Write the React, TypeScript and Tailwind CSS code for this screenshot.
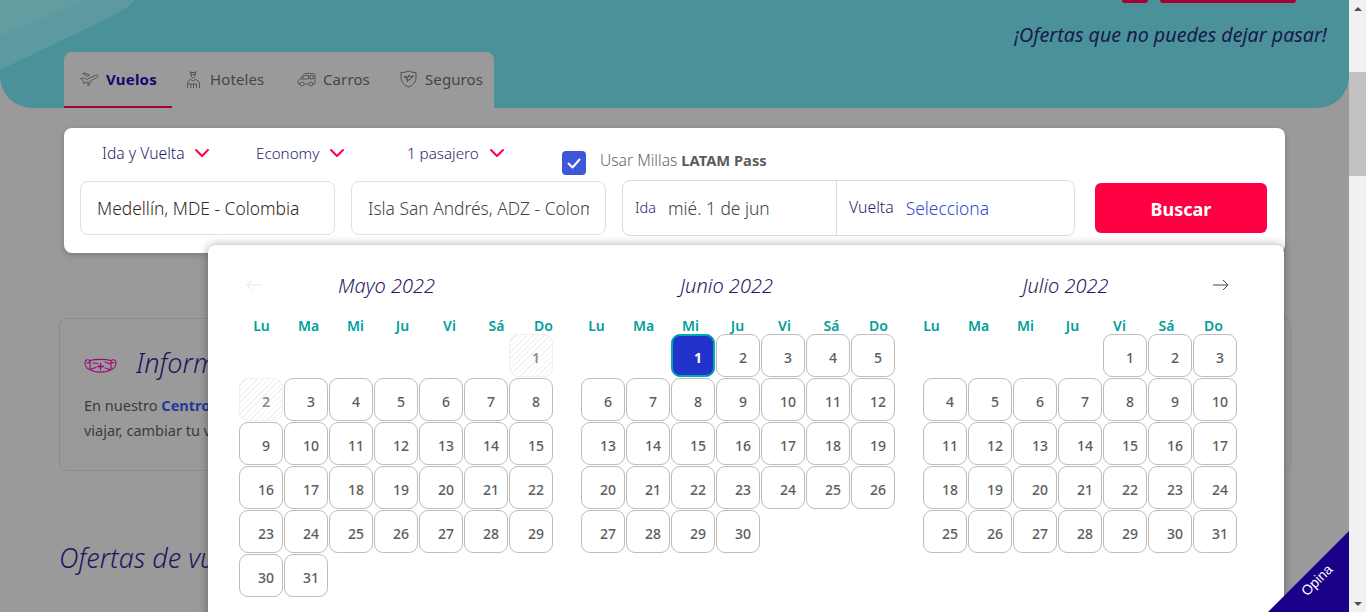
import React from "react";

type Cell = number | null;
const range = (a: number, b: number) => Array.from({ length: b - a + 1 }, (_, i) => a + i);
const blanks = (n: number): Cell[] => Array.from({ length: n }, () => null);
const DAYS = ["Lu", "Ma", "Mi", "Ju", "Vi", "Sá", "Do"];

const months = [
  { title: "Mayo 2022", titleCls: "pr-[20px]", weekCls: "-ml-[1px]", cells: [...blanks(6), ...range(1, 31)], disabled: [1, 2], selected: 0 },
  { title: "Junio 2022", titleCls: "pr-[24px]", weekCls: "-ml-[8px]", cells: [...blanks(2), ...range(1, 30)], disabled: [], selected: 1 },
  { title: "Julio 2022", titleCls: "pr-[30px]", weekCls: "-ml-[15px]", cells: [...blanks(4), ...range(1, 31)], disabled: [], selected: 0 },
];

function Chevron() {
  return (
    <svg width="16" height="10" viewBox="0 0 16 10" fill="none" className="shrink-0">
      <path d="M2 2l6 6 6-6" stroke="#ff0043" strokeWidth="2" strokeLinecap="round" strokeLinejoin="round" />
    </svg>
  );
}

function PlaneIcon() {
  return (
    <svg width="19" height="16" viewBox="0 0 19 16" fill="none" stroke="#454545" strokeWidth="0.8" strokeLinejoin="round" strokeLinecap="round">
      <path d="M1 7.500l2.500-.8 3 1.700 8-3.600c1.300-.6 3-.8 3.500-.2.400.7-.3 1.500-1.500 2.200L11 9.500l-1.600 4.500-1.600.7.600-4-3 1.300-1.200.6-1-.5.800-1.400L1 7.500z" />
      <path d="M3 2.700l1.300-.8 5.200 2.200-2 1.200L3 2.700z" />
    </svg>
  );
}
function BellhopIcon() {
  return (
    <svg width="13" height="19" viewBox="0 0 13 19" fill="none" stroke="#454545" strokeWidth="0.8" strokeLinejoin="round">
      <path d="M3.500 1v3.500h5V1M3.500 2.500h5M4 4.500c0 2 1 3.500 2 3.500s2-1.500 2-3.500" />
      <path d="M.5 18v-4.500C.5 12 1.500 10 4 9.500l2 1.500 2-1.500c2.500.5 4.500 2 4.500 4V18" />
      <path d="M.5 14h9v4M3.800 14v4M6.500 14v4" />
    </svg>
  );
}
function CarIcon() {
  return (
    <svg width="19" height="15" viewBox="0 0 19 15" fill="none" stroke="#454545" strokeWidth="0.8" strokeLinejoin="round">
      <path d="M3 12H1.500L1 9.500c0-1 1-2 2-2.200L6.500 2.500C7 2 7.500 1.500 8.500 1.500H16c1 0 2 .7 2 2V11c0 .7-.4 1-1 1h-1M7.500 12H12" />
      <path d="M4.500 7l3-3.500h4V7zM13 3.500h3.200V7H13z" />
      <circle cx="5.200" cy="12" r="2" />
      <circle cx="13.800" cy="12" r="2" />
    </svg>
  );
}
function ShieldIcon() {
  return (
    <svg width="17" height="18" viewBox="0 0 17 18" fill="none" stroke="#454545" strokeWidth="0.9" strokeLinejoin="round">
      <path d="M8.500 1C6 2.200 3.500 2.500 1 2.500v5C1 12 4.500 15.500 8.500 17c4-1.500 7.500-5 7.500-9.500v-5c-2.500 0-5-.3-7.500-1.500z" />
      <path d="M4 6.500l3 .8-1 1.700 2 .5-1 2 3-2.500 3.500-3-3 .9L9.200 5 8 7.500 4 6.500z" strokeWidth="1" />
    </svg>
  );
}
function MaskIcon() {
  return (
    <svg width="33" height="16" viewBox="0 0 33 16" fill="none" stroke="#9c0a74" strokeWidth="1.100" strokeLinejoin="round" strokeLinecap="round" className="mt-[5px]">
      <path d="M6 2.500C11 1 22 1 27 2.500v9c-5 3.500-16 3.500-21 0v-9z" />
      <path d="M6 2.500C3 1 1 2 1 5c0 3 2 6 5 6.500M27 2.500c3-1.500 5-.5 5 2.500 0 3-2 6-5 6.500" />
      <path d="M3 5c1-.5 2-.5 3-.3M30 5c-1-.5-2-.5-3-.3M9 5l5 .5M21 4l5 2M7 11l5-1.500M21 10l5 1.500" />
      <path d="M16.500 5.500v6M13.500 8.500h6" strokeWidth="1.300" />
    </svg>
  );
}

function Tab({ icon, label, active, cls, iconCls }: { icon: React.ReactNode; label: string; active?: boolean; cls: string; iconCls: string }) {
  return (
    <div className={`flex h-[56px] items-center border-b-2 ${cls} ${active ? "border-[#a70034]" : "border-transparent"}`}>
      <span className={`flex shrink-0 items-center ${iconCls}`}>{icon}</span>
      <span className={active ? "text-[15px] font-bold tracking-[0.2px] text-[#15086e]" : "text-[15px] tracking-[0.1px] text-[#454545]"}>{label}</span>
    </div>
  );
}

function Day({ n, disabled, selected }: { n: Cell; disabled: boolean; selected: boolean }) {
  if (n === null) return <div className="h-[43px] w-[44px]" />;
  const base = "flex h-[43px] w-[44px] items-end justify-center rounded-[9px] border pb-[9px] pl-[10px] text-[14px] leading-[18px]";
  if (selected) return <div className={`${base} border-[#00a9b5] bg-[#2233cc] font-bold text-white shadow-[inset_0_0_0_1px_#00a9b5]`}>{n}</div>;
  if (disabled)
    return (
      <div className={`${base} border-[#f0f0f0] bg-[repeating-linear-gradient(135deg,#f1f1f1_0,#f1f1f1_1px,#ffffff_1px,#ffffff_4px)] font-semibold text-[#8a8a8a]`}>
        {n}
      </div>
    );
  return <div className={`${base} border-[#bdbdbd] bg-white font-medium text-[#5c5c5c]`}>{n}</div>;
}

function Month({ m }: { m: (typeof months)[number] }) {
  return (
    <div className="w-[315px] shrink-0">
      <div className={`h-[24px] text-center text-[20px] font-light italic leading-[24px] text-[#251a66] ${m.titleCls}`}>{m.title}</div>
      <div className={`mt-[20px] grid w-[329px] grid-cols-7 text-center text-[14px] font-semibold leading-[16px] text-[#00a099] ${m.weekCls}`}>
        {DAYS.map((d) => (
          <div key={d}>{d}</div>
        ))}
      </div>
      <div className="grid grid-cols-[repeat(7,44px)] gap-x-[1px] gap-y-[1px]">
        {m.cells.map((n, i) => (
          <Day key={i} n={n} disabled={n !== null && m.disabled.includes(n)} selected={n === m.selected} />
        ))}
      </div>
    </div>
  );
}

export default function App() {
  return (
    <div className="flex h-[612px] w-[1366px] overflow-hidden font-['Noto_Sans','Open_Sans',sans-serif]">
      <main className="relative h-[612px] w-[1349px] shrink-0 overflow-hidden bg-[#9a9a9a]">
        {/* Header band */}
        <header className="relative flex h-[108px] justify-between overflow-hidden rounded-b-[32px] bg-[#4a9199]">
          <svg width="150" height="80" viewBox="0 0 150 80" className="absolute left-0 top-0" fill="none">
            <path d="M0 70L100 22C116 14 128 8 135 0H0z" fill="#5c9a9f" />
            <path d="M0 36L85 0H0z" fill="#619da1" />
          </svg>
          <div className="relative ml-[64px] mt-[52px] flex h-[56px] w-[430px] rounded-t-[8px] bg-[#9a9a9a]">
            <Tab cls="w-[108px] pl-[16px]" iconCls="w-[26px]" icon={<PlaneIcon />} label="Vuelos" active />
            <Tab cls="ml-[14px] w-[111px] pl-[1px]" iconCls="w-[23px]" icon={<BellhopIcon />} label="Hoteles" />
            <Tab cls="w-[103px]" iconCls="w-[26px]" icon={<CarIcon />} label="Carros" />
            <Tab cls="w-[94px]" iconCls="w-[25px]" icon={<ShieldIcon />} label="Seguros" />
          </div>
          <div className="relative flex flex-col items-end pr-[22px]">
            <div className="mr-[31px] flex gap-[12px]">
              <div className="h-[3px] w-[26px] rounded-b-[3px] bg-[#a70034]" />
              <div className="h-[3px] w-[136px] rounded-b-[3px] bg-[#a70034]" />
            </div>
            <p className="mt-[18px] text-[19.7px] italic leading-[27px] text-[#1a1a4c]">¡Ofertas que no puedes dejar pasar!</p>
          </div>
        </header>

        {/* Search card */}
        <section className="ml-[64px] mt-[20px] h-[125px] w-[1221px] rounded-[8px] bg-white px-[16px] pt-[16px] shadow-[0_2px_6px_rgba(0,0,0,0.2)]">
          <div className="flex h-[36px] items-start">
            <div className="ml-[22px] flex w-[154px] items-center gap-[9px] text-[15.7px] font-light leading-[18px] text-[#2a1f6e]">
              Ida y Vuelta <Chevron />
            </div>
            <div className="flex w-[151px] items-center gap-[10px] text-[15.2px] font-light leading-[18px] text-[#2a1f6e]">
              Economy <Chevron />
            </div>
            <div className="flex w-[155px] items-center gap-[10px] text-[15.2px] font-light leading-[18px] text-[#2a1f6e]">
              1 pasajero <Chevron />
            </div>
            <div className="mt-[7px] flex items-center">
              <span className="flex h-[24px] w-[24px] items-center justify-center rounded-[4px] bg-[#3d57d8]">
                <svg width="14" height="11" viewBox="0 0 14 11" fill="none">
                  <path d="M1.500 5.500l4 4 7-8" stroke="#fff" strokeWidth="2" strokeLinecap="round" strokeLinejoin="round" />
                </svg>
              </span>
              <span className="ml-[14px] mt-[-4px] text-[15.6px] font-light text-[#666666]">
                Usar Millas <b className="text-[14.7px] font-bold text-[#5c5c5c]">LATAM Pass</b>
              </span>
            </div>
          </div>
          <div className="flex items-center">
            <div className="flex h-[54px] w-[255px] items-center rounded-[8px] border border-[#e0e0e0] pl-[16px] text-[17.4px] font-light text-[#33271f]">
              Medellín, MDE - Colombia
            </div>
            <div className="ml-[16px] flex h-[54px] w-[255px] items-center overflow-hidden rounded-[8px] border border-[#e0e0e0] pl-[16px] pr-[16px] text-[17.4px] font-light text-[#444444]">
              <span className="overflow-hidden whitespace-nowrap">Isla San Andrés, ADZ - Colombia</span>
            </div>
            <div className="ml-[16px] flex h-[56px] w-[453px] rounded-[8px] border border-[#dcdcdc]">
              <div className="flex w-[214px] items-center border-r border-[#dcdcdc] pl-[12px]">
                <span className="text-[14.5px] font-light text-[#2a1f6e]">Ida</span>
                <span className="ml-[12px] text-[17.4px] font-light text-[#444444]">mié. 1 de jun</span>
              </div>
              <div className="flex items-center pl-[12px]">
                <span className="text-[15.8px] font-light text-[#2a1f6e]">Vuelta</span>
                <span className="ml-[12px] text-[17.4px] font-light text-[#2f4ad6]">Selecciona</span>
              </div>
            </div>
            <button className="ml-[20px] h-[50px] w-[172px] rounded-[6px] bg-[#ff0043] pt-[3px] text-[18px] font-bold text-white">Buscar</button>
          </div>
        </section>

        {/* Info box */}
        <section className="ml-[59px] mt-[65px] h-[153px] w-[1232px] rounded-[8px] border border-[#8c8c8c] pl-[24px] pt-[24px]">
          <div className="flex h-[40px] items-center gap-[19px]">
            <MaskIcon />
            <h2 className="text-[27px] font-light italic text-[#1c1660]">Información</h2>
          </div>
          <p className="mt-[10px] text-[14.5px] leading-[25px] text-[#3a3a3a]">
            En nuestro <b className="font-bold text-[#26369a]">Centro</b>
            <br />
            viajar, cambiar tu v
          </p>
        </section>

        {/* Offers */}
        <h2 className="ml-[59px] mt-[68px] w-[152px] overflow-hidden whitespace-nowrap text-[27px] font-light italic leading-[38px] text-[#1c1660]">Ofertas de vuelos</h2>

        {/* Calendar popover */}
        <div className="absolute left-[208px] top-[245px] h-[420px] w-[1076px] rounded-[8px] bg-white pl-[31px] pt-[29px] shadow-[0_0_10px_rgba(0,0,0,0.35)]">
          <svg width="18" height="12" viewBox="0 0 18 12" fill="none" stroke="#e6e6e6" className="absolute left-[37px] top-[34px]">
            <path d="M17 6H2M7 1L2 6l5 5" />
          </svg>
          <svg width="18" height="12" viewBox="0 0 18 12" fill="none" stroke="#444444" className="absolute left-[1004px] top-[34px]">
            <path d="M1 6h15M11 1l5 5-5 5" />
          </svg>
          <div className="flex gap-[27px]">
            {months.map((m) => (
              <Month key={m.title} m={m} />
            ))}
          </div>
        </div>

        {/* Feedback corner */}
        <div className="absolute bottom-0 right-0 h-[81px] w-[81px] bg-[#1b0088] [clip-path:polygon(100%_0,100%_100%,0_100%)]">
          <span className="absolute left-[30px] top-[41px] -rotate-45 font-['Liberation_Sans',sans-serif] text-[14px] leading-[16px] text-white">Opina</span>
        </div>
      </main>

      {/* Browser scrollbar */}
      <div className="flex h-[612px] w-[17px] shrink-0 flex-col bg-[#f1f1f1]">
        <div className="flex h-[17px] items-center justify-center">
          <div className="h-0 w-0 border-x-[4px] border-b-[4px] border-x-transparent border-b-[#505050]" />
        </div>
        <div className="mt-[55px] h-[104px] bg-[#c1c1c1]" />
        <div className="mt-auto flex h-[17px] items-center justify-center">
          <div className="h-0 w-0 border-x-[4px] border-t-[4px] border-x-transparent border-t-[#505050]" />
        </div>
      </div>
    </div>
  );
}
